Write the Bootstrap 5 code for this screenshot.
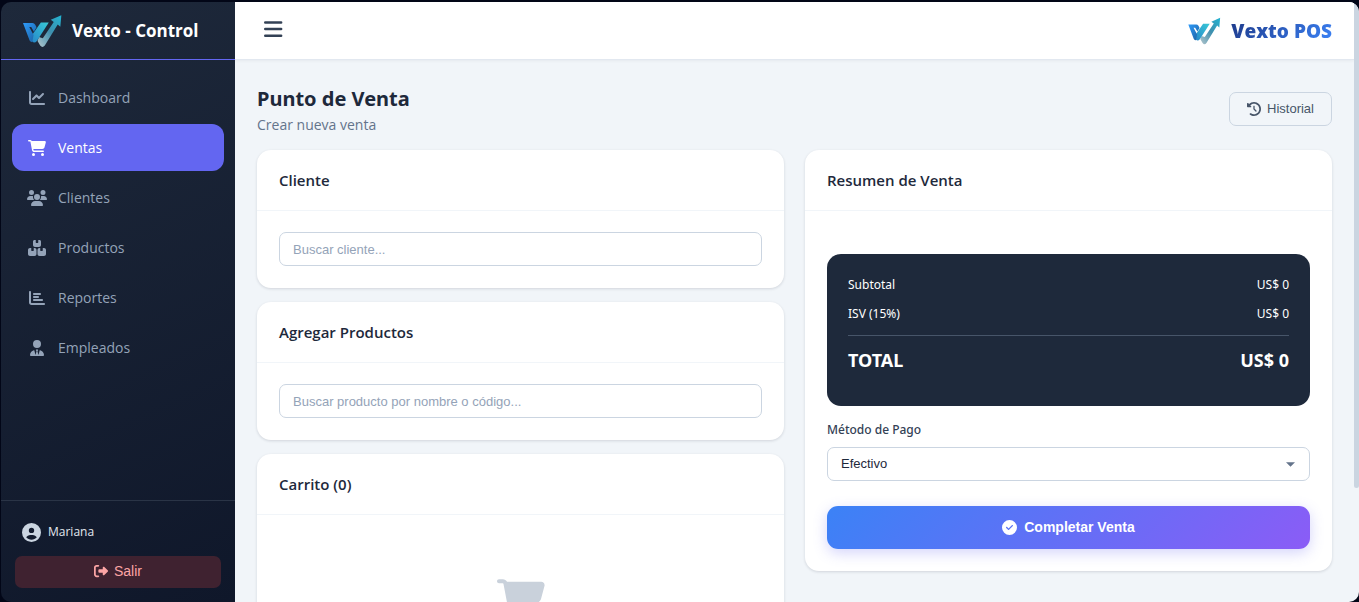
<!DOCTYPE html>
<html lang="es">
<head>
<meta charset="utf-8">
<meta name="viewport" content="width=device-width, initial-scale=1">
<title>Vexto POS</title>
<link href="https://cdn.jsdelivr.net/npm/bootstrap@5.3.0/dist/css/bootstrap.min.css" rel="stylesheet">
<style>
  :root { --ink: #1e293b; --line: #cbd5e1; --muted: #64748b; }
  body { background: #020617; color: var(--ink); font-family: "Open Sans", "Noto Sans", sans-serif; font-size: 14px; line-height: 20px; }
  svg.ico { fill: currentColor; flex: none; }
  .shell { padding: 2px 0 0 1px; }
  .sidebar { width: 234px; background: linear-gradient(155deg, #1e293b 0%, #0f172a 100%); color: #94a3b8; border-radius: 10px 0 0 10px; flex: none; }
  .brand { height: 58px; border-bottom: 1px solid #6366f1; padding-left: 22px; gap: 10px; color: #fff; font-size: 17px; font-weight: 700; }
  .menu { padding: 14px 11px; gap: 3px; }
  .menu a { height: 47px; padding: 0 15px; gap: 11px; border-radius: 12px; color: #94a3b8; font-size: 14px; text-decoration: none; }
  .menu a.active { background: #6366f1; color: #fff; }
  .menu a span { width: 20px; }
  .account { border-top: 1px solid #2a3446; padding: 21px 14px 14px; }
  .who { padding-left: 7px; gap: 7px; color: #e2e8f0; font-size: 12px; }
  .who svg { color: var(--line); }
  .logout { height: 32px; border-radius: 7px; background: #3f2230; color: #fca5a5; font-family: "Liberation Sans", sans-serif; font-size: 14px; padding: 0 0 2px; gap: 6px; margin-top: 14px; }
  .workspace { background: #f1f5f9; border-radius: 0 10px 10px 0; }
  .scroller { overflow-y: auto; scrollbar-width: none; }
  .scroller::-webkit-scrollbar { display: none; }
  .track { width: 5px; flex: none; }
  .thumb { height: 81%; background: var(--line); border-radius: 0 0 3px 3px; }
  .topbar { height: 58px; background: #fff; border-bottom: 1px solid #e2e8f0; padding: 0 22px 0 28px; box-shadow: 0 1px 3px rgba(15,23,42,.05); z-index: 2; }
  .topbar .toggle { color: #334155; line-height: 0; padding: 0 0 4px; }
  .product { gap: 10px; font-size: 19px; font-weight: 800; }
  .product b { font-weight: 800; background: linear-gradient(135deg, #1e3a8a, #3b82f6); -webkit-background-clip: text; background-clip: text; color: transparent; }
  .page { padding: 23px 22px 22px; }
  .page h1 { font-family: "Noto Sans", sans-serif; font-size: 20px; line-height: 32px; font-weight: 700; margin: 0; }
  .sub { color: var(--muted); }
  .history { height: 34px; padding: 0 17px; gap: 6px; border: 1px solid var(--line); border-radius: 7px; color: #475569; font-family: "Liberation Sans", sans-serif; font-size: 13px; }
  .panels { --bs-gutter-x: 21px; padding-top: 15px; }
  .panel { background: #fff; border-radius: 14px; box-shadow: 0 1px 3px rgba(15,23,42,.14); }
  .panel h2 { height: 61px; margin: 0; padding: 0 22px; border-bottom: 1px solid #f1f5f9; font-size: 15px; font-weight: 600; }
  .panel-inner { padding: 21px 22px 22px; }
  .stack { gap: 14px; }
  .field { height: 34px; padding: 0 13px; border: 1px solid var(--line); border-radius: 7px; color: var(--ink); font-family: "Liberation Sans", sans-serif; font-size: 13px; }
  .field::placeholder { color: #94a3b8; }
  .form-select.field { background-image: url("data:image/svg+xml,%3Csvg xmlns='http://www.w3.org/2000/svg' viewBox='0 0 10 5'%3E%3Cpath fill='%2364748b' d='M0 0h10L5 5z'/%3E%3C/svg%3E"); background-size: 9px 5px; background-position: right 14px center; }
  .empty { padding: 64px 22px; color: #c9d1db; }
  .panel-inner.summary { padding-top: 43px; }
  .totals { background: #1e293b; color: #fff; border-radius: 14px; padding: 21px 21px 33px; font-size: 12px; font-family: "Noto Sans", sans-serif; }
  .totals .amounts { margin-bottom: 9px; }
  .totals .grand { border-top: 1px solid #475569; margin-top: 11px; padding-top: 11px; font-size: 18px; line-height: 26px; font-weight: 700; }
  .pay-label { margin: 14px 0 7px; font-size: 12px; font-weight: 500; color: #334155; font-family: "Noto Sans", sans-serif; }
  .complete { height: 43px; margin-top: 25px; border: 0; border-radius: 11px; gap: 7px; color: #fff; font-family: "Liberation Sans", sans-serif; font-size: 14px; font-weight: 700; background: linear-gradient(135deg, #3b82f6, #8b5cf6); box-shadow: 0 4px 14px rgba(99,102,241,.28); }
</style>
</head>
<body>
<svg width="0" height="0" class="position-absolute" aria-hidden="true">
  <defs>
    <linearGradient id="gA" x1="0" y1="0" x2="1" y2="1"><stop offset="0" stop-color="#2e9bfa"/><stop offset=".6" stop-color="#2277c4"/><stop offset="1" stop-color="#1d5f9c"/></linearGradient>
    <linearGradient id="gB" x1="1" y1="0" x2="0" y2="1"><stop offset="0" stop-color="#39c9d6"/><stop offset="1" stop-color="#2585c9"/></linearGradient>
    <linearGradient id="gC" x1="1" y1="0" x2="0" y2="1"><stop offset="0" stop-color="#22b4d2"/><stop offset=".5" stop-color="#3f8fae"/><stop offset="1" stop-color="#b4c6cc"/></linearGradient>
    <symbol id="logo" viewBox="0 0 118 102">
      <path fill="url(#gC)" d="M116 3L84 17l9 7-33 49-12-4-4 12 8 14q7 9 14 0L105 31l8 7z"/>
      <path fill="url(#gB)" d="M54 25h24L42 81q-7 8-14 2l-6-12z"/>
      <path fill="url(#gA)" d="M0 27h29q5 0 8 5l4 8-8 13-8-14h-6l13 24-4 22q-5 0-8-5z"/>
    </symbol>
  </defs>
</svg>

<div class="shell d-flex vh-100 overflow-hidden">
  <aside class="sidebar d-flex flex-column">
    <div class="brand d-flex align-items-center">
      <svg width="39" height="34"><use href="#logo"/></svg>
      <span>Vexto - Control</span>
    </div>
    <nav class="menu d-flex flex-column flex-grow-1">
      <a href="#" class="d-flex align-items-center"><span class="d-flex justify-content-center"><svg class="ico" width="16" height="16" viewBox="0 0 512 512"><path d="M64 64c0-17.700-14.300-32-32-32S0 46.300 0 64V400c0 44.200 35.800 80 80 80H480c17.700 0 32-14.300 32-32s-14.300-32-32-32H80c-8.800 0-16-7.200-16-16V64zm406.600 86.600c12.500-12.500 12.500-32.800 0-45.300s-32.800-12.500-45.300 0L320 210.700l-57.400-57.400c-12.500-12.500-32.800-12.500-45.300 0l-112 112c-12.500 12.500-12.500 32.800 0 45.300s32.800 12.500 45.300 0L240 221.300l57.400 57.400c12.500 12.500 32.800 12.500 45.300 0l128-128z"/></svg></span>Dashboard</a>
      <a href="#" class="active d-flex align-items-center"><span class="d-flex justify-content-center"><svg class="ico" width="18" height="16" viewBox="0 0 576 512"><path d="M0 24C0 10.700 10.700 0 24 0H69.500c22 0 41.500 12.800 50.600 32h411c26.300 0 45.500 25 38.600 50.400l-41 152.300c-8.500 31.400-37 53.300-69.500 53.300H170.700l5.400 28.500c2.200 11.300 12.100 19.500 23.600 19.500H488c13.300 0 24 10.700 24 24s-10.700 24-24 24H199.700c-34.600 0-64.300-24.600-70.700-58.500L77.400 54.500c-.7-3.800-4-6.500-7.900-6.500H24C10.700 48 0 37.300 0 24zM128 464a48 48 0 1 1 96 0 48 48 0 1 1 -96 0zm336-48a48 48 0 1 1 0 96 48 48 0 1 1 0-96z"/></svg></span>Ventas</a>
      <a href="#" class="d-flex align-items-center"><span class="d-flex justify-content-center"><svg class="ico" width="20" height="16" viewBox="0 0 640 512"><path d="M144 0a80 80 0 1 1 0 160A80 80 0 1 1 144 0zM512 0a80 80 0 1 1 0 160A80 80 0 1 1 512 0zM0 298.700C0 239.800 47.800 192 106.700 192h42.700c15.900 0 31 3.500 44.600 9.700c-1.300 7.200-1.900 14.700-1.900 22.300c0 38.200 16.800 72.500 43.300 96H21.300C9.600 320 0 310.400 0 298.700zM405.300 320c26.600-23.500 43.300-57.800 43.300-96c0-7.600-.7-15-1.900-22.300c13.600-6.300 28.700-9.700 44.600-9.700h42.700C592.200 192 640 239.800 640 298.700c0 11.800-9.600 21.300-21.300 21.300H405.300zM224 224a96 96 0 1 1 192 0 96 96 0 1 1 -192 0zM128 485.300C128 411.700 187.700 352 261.300 352H378.700C452.300 352 512 411.700 512 485.300c0 14.700-11.900 26.700-26.700 26.700H154.700c-14.700 0-26.700-11.900-26.700-26.700z"/></svg></span>Clientes</a>
      <a href="#" class="d-flex align-items-center"><span class="d-flex justify-content-center"><svg class="ico" width="18" height="16" viewBox="0 0 576 512"><path d="M248 0H208c-26.500 0-48 21.500-48 48V160c0 35.300 28.700 64 64 64H352c35.300 0 64-28.700 64-64V48c0-26.500-21.500-48-48-48H328V80c0 8.800-7.200 16-16 16H264c-8.800 0-16-7.200-16-16V0zM64 256c-35.300 0-64 28.700-64 64V448c0 35.300 28.700 64 64 64H208c35.300 0 64-28.700 64-64V320c0-35.300-28.700-64-64-64H184v80c0 8.800-7.200 16-16 16H120c-8.800 0-16-7.200-16-16V256H64zM368 512H512c35.300 0 64-28.700 64-64V320c0-35.300-28.700-64-64-64H472v80c0 8.800-7.200 16-16 16H408c-8.800 0-16-7.200-16-16V256H368c-35.300 0-64 28.700-64 64V448c0 35.300 28.700 64 64 64z"/></svg></span>Productos</a>
      <a href="#" class="d-flex align-items-center"><span class="d-flex justify-content-center"><svg class="ico" width="16" height="16" viewBox="0 0 512 512"><path d="M32 32c17.700 0 32 14.300 32 32V400c0 8.800 7.200 16 16 16H480c17.700 0 32 14.300 32 32s-14.300 32-32 32H80c-44.200 0-80-35.800-80-80V64C0 46.300 14.300 32 32 32zm96 96c0-17.700 14.300-32 32-32l192 0c17.700 0 32 14.300 32 32s-14.300 32-32 32H160c-17.700 0-32-14.300-32-32zm32 64H288c17.700 0 32 14.300 32 32s-14.300 32-32 32H160c-17.700 0-32-14.300-32-32s14.300-32 32-32zm0 96H416c17.700 0 32 14.300 32 32s-14.300 32-32 32H160c-17.700 0-32-14.300-32-32s14.300-32 32-32z"/></svg></span>Reportes</a>
      <a href="#" class="d-flex align-items-center"><span class="d-flex justify-content-center"><svg class="ico" width="14" height="16" viewBox="0 0 448 512"><path d="M96 128a128 128 0 1 0 256 0A128 128 0 1 0 96 128zm94.500 200.200l18.600 31L175.800 483.100l-36-146.900c-2-8.100-9.800-13.400-17.900-11.300C51.900 342.400 0 405.800 0 481.300c0 17 13.800 30.700 30.700 30.700H417.300c17 0 30.700-13.800 30.700-30.700c0-75.500-51.900-138.900-121.900-156.400c-8.100-2-15.900 3.300-17.900 11.300l-36 146.900L238.900 359.200l18.600-31c6.400-10.700-1.300-24.200-13.700-24.200H204.300c-12.400 0-20.100 13.600-13.700 24.200z"/></svg></span>Empleados</a>
    </nav>
    <div class="account">
      <div class="who d-flex align-items-center">
        <svg class="ico" width="19" height="19" viewBox="0 0 512 512"><path d="M399 384.200C376.900 345.800 335.400 320 288 320H224c-47.400 0-88.900 25.800-111 64.200c35.200 39.200 86.200 63.800 143 63.800s107.800-24.700 143-63.800zM0 256a256 256 0 1 1 512 0A256 256 0 1 1 0 256zm256 16a72 72 0 1 0 0-144 72 72 0 1 0 0 144z"/></svg>
        <span>Mariana</span>
      </div>
      <button type="button" class="logout btn w-100 d-flex align-items-center justify-content-center">
        <svg class="ico" width="14" height="14" viewBox="0 0 512 512"><path d="M377.900 105.900L500.700 228.700c7.200 7.200 11.300 17.100 11.300 27.300s-4.100 20.100-11.300 27.300L377.900 406.100c-6.400 6.400-15 9.900-24 9.900c-18.700 0-33.900-15.200-33.900-33.900l0-62.100-128 0c-17.700 0-32-14.300-32-32l0-64c0-17.700 14.300-32 32-32l128 0 0-62.100c0-18.700 15.200-33.900 33.900-33.900c9 0 17.600 3.600 24 9.900zM160 96L96 96c-17.700 0-32 14.300-32 32l0 256c0 17.700 14.300 32 32 32l64 0c17.700 0 32 14.300 32 32s-14.300 32-32 32l-64 0c-53 0-96-43-96-96L0 128C0 75 43 32 96 32l64 0c17.700 0 32 14.300 32 32s-14.300 32-32 32z"/></svg>
        Salir
      </button>
    </div>
  </aside>

  <div class="workspace d-flex flex-grow-1 overflow-hidden">
    <div class="scroller flex-grow-1">
      <header class="topbar sticky-top d-flex align-items-center justify-content-between">
        <button type="button" class="toggle btn border-0" aria-label="Menú"><svg width="20" height="18" viewBox="0 0 20 18" fill="none" stroke="currentColor" stroke-width="2.600" stroke-linecap="round"><path d="M2.300 2.500h15.800M2.300 9h15.800M2.300 15.700h15.800"/></svg></button>
        <div class="product d-flex align-items-center">
          <svg width="33" height="28"><use href="#logo"/></svg>
          <b>Vexto POS</b>
        </div>
      </header>

      <main class="page">
        <div class="d-flex justify-content-between align-items-center">
          <div>
            <h1>Punto de Venta</h1>
            <div class="sub">Crear nueva venta</div>
          </div>
          <button type="button" class="history btn d-flex align-items-center">
            <svg class="ico" width="14" height="14" viewBox="0 0 512 512"><path d="M75 75L41 41C25.900 25.900 0 36.600 0 57.900V168c0 13.300 10.700 24 24 24H134.100c21.400 0 32.100-25.900 17-41l-30.800-30.800C155 85.500 203 64 256 64c106 0 192 86 192 192s-86 192-192 192c-40.800 0-78.600-12.700-109.700-34.400c-14.500-10.100-34.400-6.600-44.600 7.900s-6.600 34.400 7.900 44.600C151.200 495 201.700 512 256 512c141.400 0 256-114.600 256-256S397.400 0 256 0C185.300 0 121.300 28.700 75 75zm181 53c-13.300 0-24 10.700-24 24V256c0 6.400 2.500 12.500 7 17l72 72c9.400 9.400 24.600 9.400 33.900 0s9.400-24.600 0-33.900l-65-65V152c0-13.300-10.700-24-24-24z"/></svg>
            Historial
          </button>
        </div>

        <div class="panels row align-items-start">
          <div class="col-6 d-flex flex-column stack">
            <section class="panel">
              <h2 class="d-flex align-items-center">Cliente</h2>
              <div class="panel-inner"><input type="text" class="form-control field" placeholder="Buscar cliente..." aria-label="Buscar cliente"></div>
            </section>
            <section class="panel">
              <h2 class="d-flex align-items-center">Agregar Productos</h2>
              <div class="panel-inner"><input type="text" class="form-control field" placeholder="Buscar producto por nombre o código..." aria-label="Buscar producto"></div>
            </section>
            <section class="panel">
              <h2 class="d-flex align-items-center">Carrito (0)</h2>
              <div class="empty text-center">
                <svg class="ico" width="48" height="43" viewBox="0 0 576 512"><path d="M0 24C0 10.700 10.700 0 24 0H69.500c22 0 41.500 12.800 50.600 32h411c26.300 0 45.500 25 38.600 50.400l-41 152.300c-8.500 31.400-37 53.300-69.500 53.300H170.700l5.400 28.500c2.200 11.300 12.100 19.500 23.600 19.500H488c13.300 0 24 10.700 24 24s-10.700 24-24 24H199.700c-34.600 0-64.300-24.600-70.700-58.500L77.400 54.500c-.7-3.800-4-6.500-7.900-6.500H24C10.700 48 0 37.300 0 24zM128 464a48 48 0 1 1 96 0 48 48 0 1 1 -96 0zm336-48a48 48 0 1 1 0 96 48 48 0 1 1 0-96z"/></svg>
              </div>
            </section>
          </div>
          <div class="col-6">
            <section class="panel">
              <h2 class="d-flex align-items-center">Resumen de Venta</h2>
              <div class="panel-inner summary">
                <div class="totals">
                  <div class="amounts d-flex justify-content-between"><span>Subtotal</span><span>US$ 0</span></div>
                  <div class="amounts d-flex justify-content-between"><span>ISV (15%)</span><span>US$ 0</span></div>
                  <div class="grand d-flex justify-content-between"><span>TOTAL</span><span>US$ 0</span></div>
                </div>
                <label for="pay" class="pay-label d-block">Método de Pago</label>
                <select id="pay" class="form-select field"><option>Efectivo</option></select>
                <button type="button" class="complete btn w-100 d-flex align-items-center justify-content-center">
                  <svg class="ico" width="15" height="15" viewBox="0 0 512 512"><path d="M256 512A256 256 0 1 0 256 0a256 256 0 1 0 0 512zM369 209L241 337c-9.400 9.400-24.600 9.400-33.900 0l-64-64c-9.400-9.400-9.400-24.600 0-33.900s24.600-9.400 33.900 0l47 47L335 175c9.400-9.400 24.600-9.400 33.900 0s9.400 24.600 0 33.900z"/></svg>
                  Completar Venta
                </button>
              </div>
            </section>
          </div>
        </div>
      </main>
    </div>
    <div class="track"><div class="thumb"></div></div>
  </div>
</div>
<script src="https://cdn.jsdelivr.net/npm/bootstrap@5.3.0/dist/js/bootstrap.bundle.min.js"></script>
</body>
</html>
